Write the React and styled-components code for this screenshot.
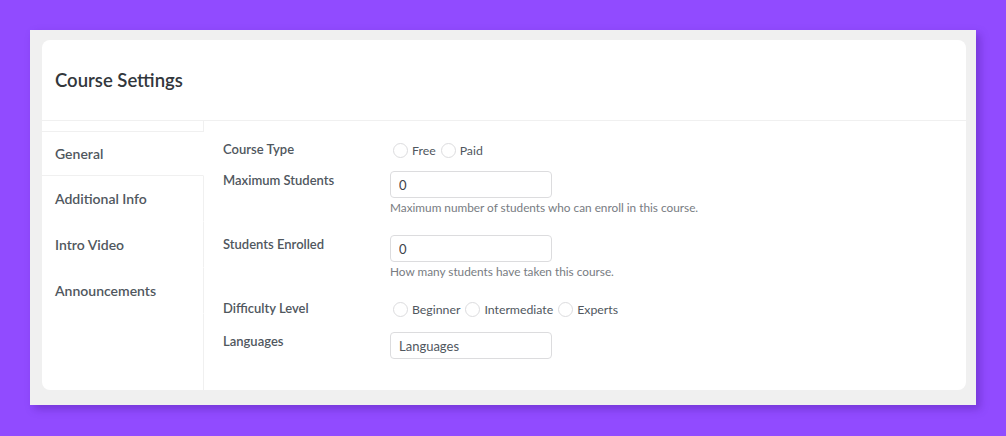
import styled, { createGlobalStyle } from "styled-components";

const GlobalStyle = createGlobalStyle`
  html, body {
    margin: 0;
    background: #914bff;
  }
  body {
    font-family: Lato, "Open Sans", Arial, sans-serif;
  }
`;

const Page = styled.div`
  padding: 30px;
`;
const Frame = styled.div`
  width: 946px;
  box-sizing: border-box;
  background: #f0f0f0;
  padding: 10px 10px 15px 12px;
  box-shadow: 4px 4px 8px rgba(70, 20, 140, 0.35);
`;
const Card = styled.div`
  background: #fff;
  border-radius: 8px;
  height: 350px;
  display: flex;
  flex-direction: column;
  overflow: hidden;
`;
const Header = styled.div`
  height: 80px;
  flex-shrink: 0;
  display: flex;
  align-items: center;
  padding-left: 13px;
  border-bottom: 1px solid #f0f0f0;
`;
const Title = styled.h2`
  margin: 0;
  font-size: 18.5px;
  font-weight: 600;
  color: #32373c;
`;
const Body = styled.div`
  flex: 1;
  display: flex;
`;
const Sidebar = styled.div`
  width: 162px;
  flex-shrink: 0;
  display: flex;
  flex-direction: column;
`;
const SideTop = styled.div`
  height: 10px;
  border-bottom: 1px solid #f0f0f0;
  border-right: 1px solid #f0f0f0;
`;
const Tab = styled.div`
  height: ${(p) => (p.$active ? "43px" : "45px")};
  display: flex;
  align-items: center;
  padding-left: 13px;
  font-size: 14px;
  font-weight: 600;
  color: #50575e;
  border-right: 1px solid ${(p) => (p.$active ? "transparent" : "#f0f0f0")};
  border-bottom: 1px solid ${(p) => (p.$active ? "#f0f0f0" : "transparent")};
`;
const SideFill = styled.div`
  flex: 1;
  border-right: 1px solid #f0f0f0;
`;
const Content = styled.div`
  flex: 1;
  padding: 19px 0 0 19px;
  display: flex;
  flex-direction: column;
  gap: 14px;
`;
const Row = styled.div`
  display: grid;
  grid-template-columns: 167px 1fr;
  margin-top: ${(p) => (p.$tight ? "-2px" : "0")};
  margin-bottom: ${(p) => (p.$desc ? "5px" : "0")};
`;
const Label = styled.div`
  font-size: 13px;
  font-weight: 600;
  line-height: 18px;
  color: #50575e;
`;
const Field = styled.div`
  display: flex;
  flex-direction: column;
`;
const RadioGroup = styled.div`
  display: flex;
  align-items: center;
  height: 18px;
  margin-top: 1px;
  padding-left: 3px;
  gap: 5px;
`;
const RadioItem = styled.label`
  display: flex;
  align-items: center;
  gap: 4px;
  font-size: 12.3px;
  color: #50575e;
`;
const Circle = styled.span`
  width: 13px;
  height: 13px;
  border: 1px solid #dcdcde;
  border-radius: 50%;
  box-sizing: content-box;
`;
const Input = styled.input`
  width: 162px;
  height: 27px;
  box-sizing: border-box;
  border: 1px solid #dcdcde;
  border-radius: 4px;
  padding: 0 8px;
  font-family: inherit;
  font-size: 13px;
  color: #3c434a;
  outline: none;
  &::placeholder {
    color: #50575e;
  }
`;
const Desc = styled.div`
  margin-top: 2px;
  font-size: 11.8px;
  line-height: 16px;
  color: #787c82;
`;

const Radios = ({ options }) => (
  <RadioGroup>
    {options.map((o) => (
      <RadioItem key={o}>
        <Circle />
        {o}
      </RadioItem>
    ))}
  </RadioGroup>
);

const tabs = ["General", "Additional Info", "Intro Video", "Announcements"];

export default function App() {
  return (
    <>
      <GlobalStyle />
      <Page>
        <Frame>
          <Card>
            <Header>
              <Title>Course Settings</Title>
            </Header>
            <Body>
              <Sidebar>
                <SideTop />
                {tabs.map((t, i) => (
                  <Tab key={t} $active={i === 0}>
                    {t}
                  </Tab>
                ))}
                <SideFill />
              </Sidebar>
              <Content>
                <Row>
                  <Label>Course Type</Label>
                  <Radios options={["Free", "Paid"]} />
                </Row>
                <Row $desc $tight>
                  <Label>Maximum Students</Label>
                  <Field>
                    <Input defaultValue="0" />
                    <Desc>Maximum number of students who can enroll in this course.</Desc>
                  </Field>
                </Row>
                <Row $desc>
                  <Label>Students Enrolled</Label>
                  <Field>
                    <Input defaultValue="0" />
                    <Desc>How many students have taken this course.</Desc>
                  </Field>
                </Row>
                <Row>
                  <Label>Difficulty Level</Label>
                  <Radios options={["Beginner", "Intermediate", "Experts"]} />
                </Row>
                <Row>
                  <Label>Languages</Label>
                  <Input placeholder="Languages" />
                </Row>
              </Content>
            </Body>
          </Card>
        </Frame>
      </Page>
    </>
  );
}
